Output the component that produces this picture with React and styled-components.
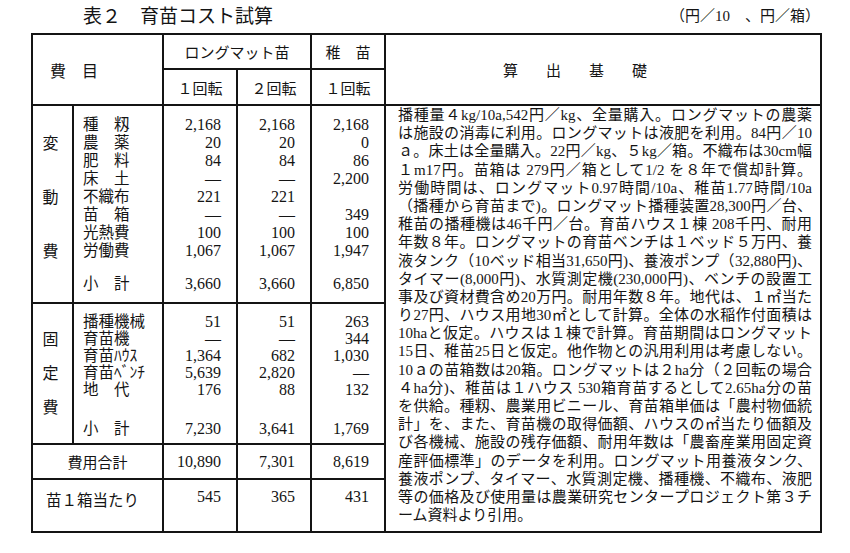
import styled, { createGlobalStyle } from "styled-components"

const GlobalStyle = createGlobalStyle`
    html, body {
        margin: 0;
        padding: 0;
        background: #fff;
    }
    body {
        font-family: "Liberation Serif", "Noto Sans CJK JP", serif;
        color: #141414;
    }
`

const Page = styled.div`
    width: 850px;
    height: 553px;
    padding-left: 31px;
    box-sizing: border-box;
`
const Caption = styled.div`
    display: flex;
    align-items: center;
    justify-content: space-between;
    width: 789px;
    height: 33px;
    padding-left: 52px;
    box-sizing: border-box;
`
const Title = styled.h1`
    margin: 0;
    font-size: 19px;
    font-weight: 400;
    line-height: 1;
`
const Unit = styled.span`
    font-size: 15px;
    line-height: 1;
`
const Table = styled.table`
    border-collapse: collapse;
    table-layout: fixed;
    width: 789px;
    border: 2px solid #141414;
`
const Row = styled.tr`
    height: ${p => p.$h}px;
`
const Cell = styled.td`
    border: 2px solid #141414;
    padding: 0;
    text-align: ${p => p.$align || "center"};
    vertical-align: ${p => p.$valign || "middle"};
    font-size: ${p => p.$size || 15}px;
`
const Head = styled(Cell).attrs({ as: "th" })`
    font-weight: 400;
`
const Spread = styled.span`
    letter-spacing: ${p => p.$ls || 0}px;
    padding-left: ${p => p.$pl || 0}px;
`
const Category = styled.div`
    display: flex;
    flex-direction: column;
    align-items: center;
    gap: ${p => p.$gap}px;
    padding: 0 4px ${p => p.$pb || 0}px 0;
    font-size: 16px;
    line-height: 18px;
`
const Stack = styled.div`
    display: flex;
    flex-direction: column;
    padding: ${p => p.$pt}px ${p => p.$pr || 0}px 0 ${p => p.$pl || 0}px;
    font-size: ${p => p.$size}px;
`
const Line = styled.div`
    height: ${p => p.$lh}px;
    line-height: ${p => p.$lh}px;
    white-space: nowrap;
    margin-top: ${p => p.$gap || 0}px;
`
const Notes = styled.div`
    padding: 0 8px 0 12px;
    font-size: 15px;
`
const NoteLine = styled.div`
    height: 18.2px;
    line-height: 18.2px;
    white-space: nowrap;
    text-align: justify;
    text-align-last: ${p => (p.$last ? "left" : "justify")};
`

const variable = {
    rows: [
        ["種　籾", "2,168", "2,168", "2,168"],
        ["農　薬", "20", "20", "0"],
        ["肥　料", "84", "84", "86"],
        ["床　土", "—", "—", "2,200"],
        ["不織布", "221", "221", ""],
        ["苗　箱", "—", "—", "349"],
        ["光熱費", "100", "100", "100"],
        ["労働費", "1,067", "1,067", "1,947"],
    ],
    total: ["小　計", "3,660", "3,660", "6,850"],
    lh: 18,
    pt: 10,
    gap: 15,
    h: 198,
}

const fixed = {
    rows: [
        ["播種機械", "51", "51", "263"],
        ["育苗機", "—", "—", "344"],
        ["育苗ﾊｳｽ", "1,364", "682", "1,030"],
        ["育苗ﾍﾞﾝﾁ", "5,639", "2,820", "—"],
        ["地　代", "176", "88", "132"],
    ],
    total: ["小　計", "7,230", "3,641", "1,769"],
    lh: 17,
    pt: 9,
    gap: 22,
    h: 141,
}

const notes = [
    "播種量４kg/10a,542円／kg、全量購入。ロングマットの農薬",
    "は施設の消毒に利用。ロングマットは液肥を利用。84円／10",
    "ａ。床土は全量購入。22円／kg、５kg／箱。不織布は30cm幅",
    "１m17円。苗箱は 279円／箱として1/2 を８年で償却計算。",
    "労働時間は、ロングマット0.97時間/10a、稚苗1.77時間/10a",
    "（播種から育苗まで)。ロングマット播種装置28,300円／台、",
    "稚苗の播種機は46千円／台。育苗ハウス１棟 208千円、耐用",
    "年数８年。ロングマットの育苗ベンチは１ベッド５万円、養",
    "液タンク（10ベッド相当31,650円)、養液ポンプ（32,880円)、",
    "タイマー(8,000円)、水質測定機(230,000円)、ベンチの設置工",
    "事及び資材費含め20万円。耐用年数８年。地代は、１㎡当た",
    "り27円、ハウス用地30㎡として計算。全体の水稲作付面積は",
    "10haと仮定。ハウスは１棟で計算。育苗期間はロングマット",
    "15日、稚苗25日と仮定。他作物との汎用利用は考慮しない。",
    "10ａの苗箱数は20箱。ロングマットは２ha分（２回転の場合",
    "４ha分)、稚苗は１ハウス 530箱育苗するとして2.65ha分の苗",
    "を供給。種籾、農業用ビニール、育苗箱単価は「農村物価統",
    "計」を、また、育苗機の取得価額、ハウスの㎡当たり価額及",
    "び各機械、施設の残存価額、耐用年数は「農畜産業用固定資",
    "産評価標準」のデータを利用。ロングマット用養液タンク、",
    "養液ポンプ、タイマー、水質測定機、播種機、不織布、液肥",
    "等の価格及び使用量は農業研究センタープロジェクト第３チ",
    "ーム資料より引用。",
]

const Column = ({ section, index, ...rest }) => (
    <Stack $pt={section.pt} {...rest}>
        {section.rows.map((r, i) => (
            <Line key={i} $lh={section.lh}>{r[index]}</Line>
        ))}
        <Line $lh={section.lh} $gap={section.gap}>{section.total[index]}</Line>
    </Stack>
)

const Section = ({ section, label, gap, pb, withNotes }) => (
    <Row $h={section.h}>
        <Cell>
            <Category $gap={gap} $pb={pb}>
                {label.map(c => <span key={c}>{c}</span>)}
            </Category>
        </Cell>
        <Cell $align="left" $valign="top">
            <Column section={section} index={0} $size={15.5} $pl={9} />
        </Cell>
        {[1, 2, 3].map(i => (
            <Cell key={i} $align="right" $valign="top">
                <Column section={section} index={i} $size={16} $pr={15} />
            </Cell>
        ))}
        {withNotes &&
            <Cell rowSpan={4} $align="left" $valign="top">
                <Notes>
                    {notes.map((n, i) => (
                        <NoteLine key={i} $last={i === notes.length - 1}>{n}</NoteLine>
                    ))}
                </Notes>
            </Cell>
        }
    </Row>
)

const Num = styled(Cell)`
    padding-right: 15px;
    font-size: 16px;
`
const TopNum = styled(Num)`
    padding-top: 8px;
`

const App = () => {
    return (
        <Page>
            <GlobalStyle />
            <Caption>
                <Title>表２　育苗コスト試算</Title>
                <Unit>（円／10　、円／箱）</Unit>
            </Caption>
            <Table>
                <colgroup>
                    <col style={{ width: 41 }} />
                    <col style={{ width: 90 }} />
                    <col style={{ width: 74 }} />
                    <col style={{ width: 74 }} />
                    <col style={{ width: 74 }} />
                    <col style={{ width: 436 }} />
                </colgroup>
                <thead>
                    <Row $h={35}>
                        <Head colSpan={2} rowSpan={2} $align="left" $size={16}>
                            <Spread $pl={17}>費　目</Spread>
                        </Head>
                        <Head colSpan={2}>ロングマット苗</Head>
                        <Head>稚　苗</Head>
                        <Head rowSpan={2} $align="left">
                            <Spread $ls={28} $pl={117}>算出基礎</Spread>
                        </Head>
                    </Row>
                    <Row $h={36}>
                        <Head>１回転</Head>
                        <Head>２回転</Head>
                        <Head>１回転</Head>
                    </Row>
                </thead>
                <tbody>
                    <Section section={variable} label={["変", "動", "費"]} gap={36} pb={13} withNotes />
                    <Section section={fixed} label={["固", "定", "費"]} gap={16} />
                    <Row $h={35}>
                        <Cell colSpan={2}>費用合計</Cell>
                        <Num $align="right">10,890</Num>
                        <Num $align="right">7,301</Num>
                        <Num $align="right">8,619</Num>
                    </Row>
                    <Row $h={53}>
                        <Cell colSpan={2} $align="left" $valign="top">
                            <Stack $pt={8} $pl={13} $size={15.5}>苗１箱当たり</Stack>
                        </Cell>
                        <TopNum $align="right" $valign="top">545</TopNum>
                        <TopNum $align="right" $valign="top">365</TopNum>
                        <TopNum $align="right" $valign="top">431</TopNum>
                    </Row>
                </tbody>
            </Table>
        </Page>
    )
}

export default App
